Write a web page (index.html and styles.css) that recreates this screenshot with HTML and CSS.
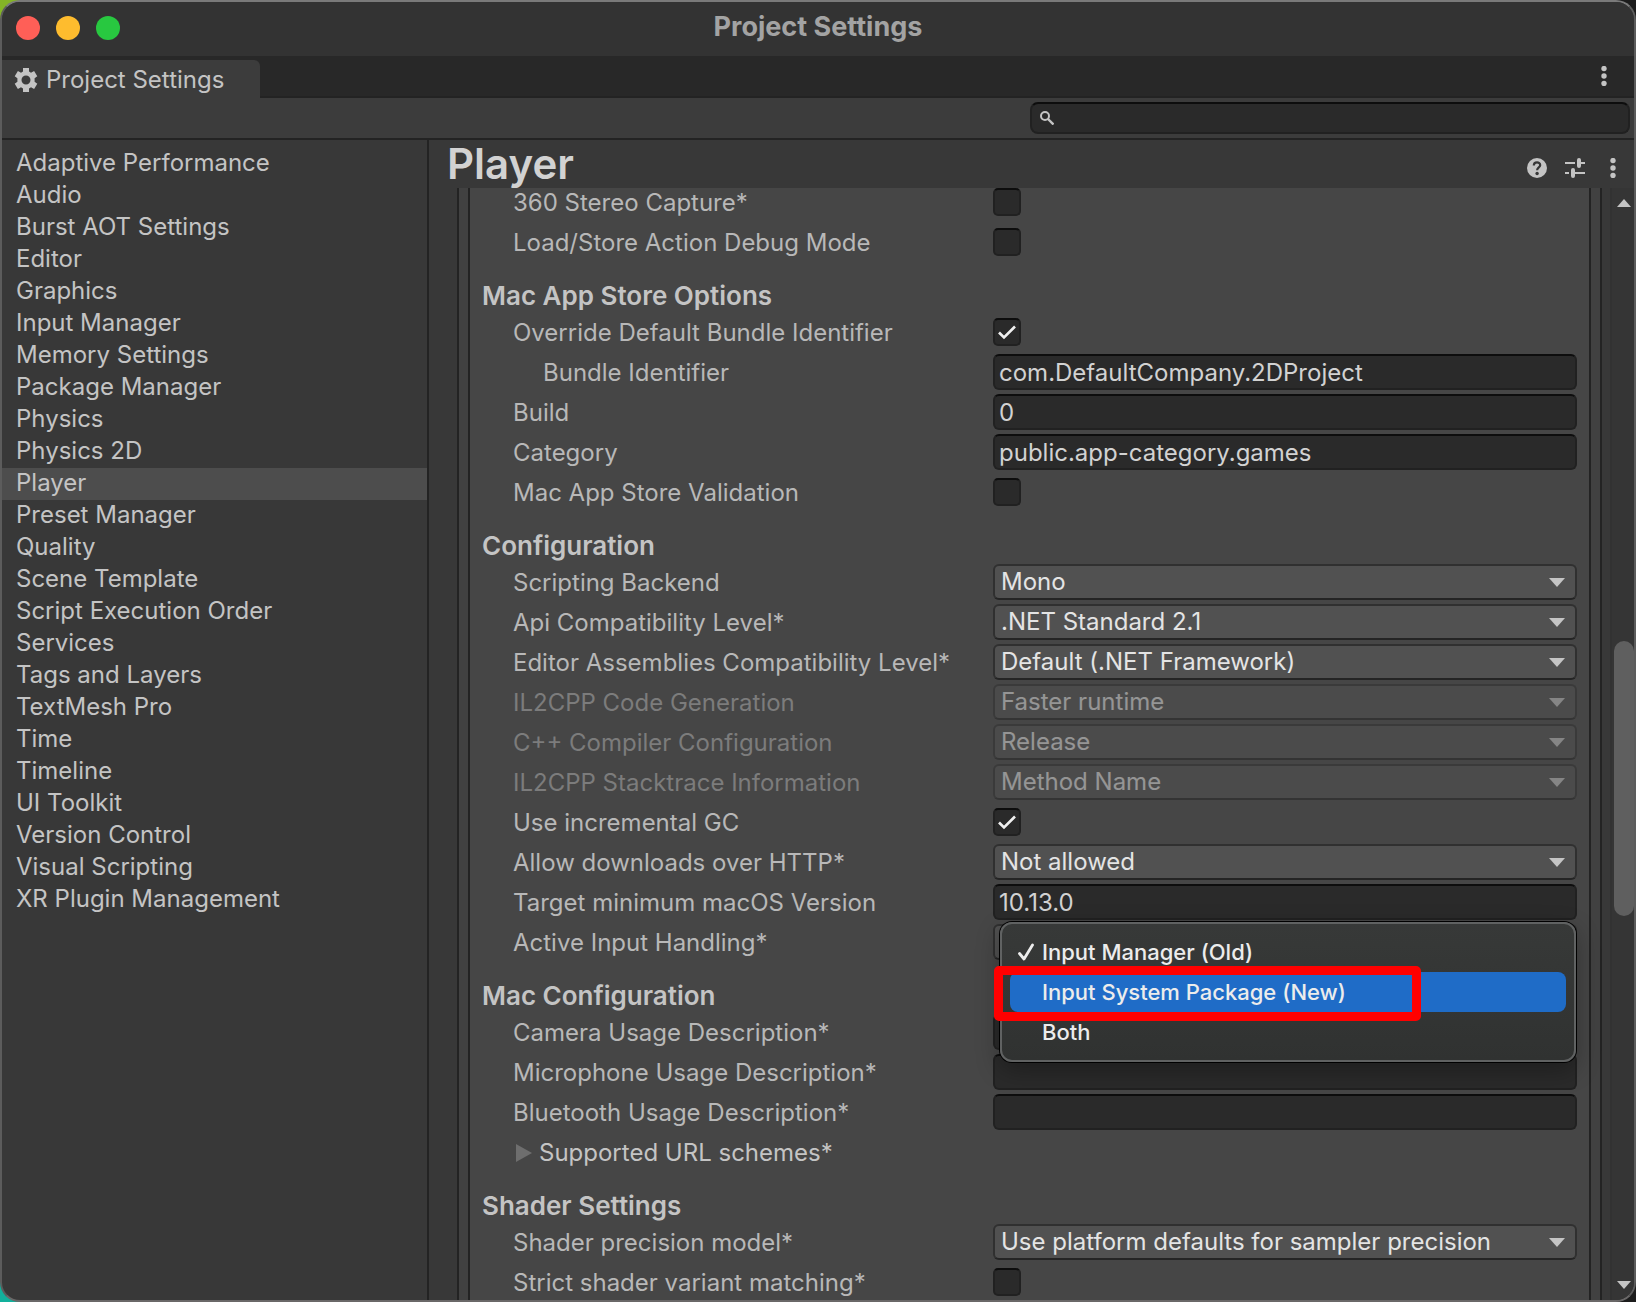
FILE: index.html
```html
<!DOCTYPE html>
<html lang="en">
<head>
    <meta charset="UTF-8">
    <meta name="viewport" content="width=device-width, initial-scale=1.0">
    <title>Project Settings</title>
    <link rel="stylesheet" href="styles.css">
</head>
<body class="page">
    <div class="window">
        <header class="titlebar">
            <div class="titlebar__buttons">
                <button class="light light--close" type="button" aria-label="Close"></button>
                <button class="light light--minimize" type="button" aria-label="Minimize"></button>
                <button class="light light--zoom" type="button" aria-label="Zoom"></button>
            </div>
            <h1 class="titlebar__title">Project Settings</h1>
        </header>

        <div class="tabs">
            <button class="tab" type="button">
                <svg class="tab__ico" viewBox="0 0 24 24" fill="currentColor" fill-rule="evenodd"><path d="M9 0h6v3.600l2 1.100 3.100-1.700 3.200 5.300-2.700 2v3.400l2.700 2-3.200 5.300-3.100-1.700-2 1.100V24H9v-3.600l-2-1.100-3.100 1.700-3.200-5.300 2.700-2v-3.400l-2.700-2 3.200-5.300L7 4.700l2-1.100zM12 7.500a4.500 4.500 0 1 0 0 9a4.500 4.500 0 0 0 0-9z"/></svg>
                Project Settings
            </button>
            <button class="icon-btn tabs__menu" type="button" aria-label="Window menu">
                <svg class="dots" viewBox="0 0 6 20" fill="currentColor"><circle cx="3" cy="2.500" r="2.700"/><circle cx="3" cy="10" r="2.700"/><circle cx="3" cy="17.500" r="2.700"/></svg>
            </button>
        </div>

        <div class="toolbar">
            <label class="search">
                <svg class="search__ico" viewBox="0 0 14 14" fill="none" stroke="currentColor" stroke-width="2"><circle cx="5" cy="5" r="4"/><path d="M8 8l5.500 5.500" stroke-width="2.400"/></svg>
                <input class="search__input" type="text" aria-label="Search settings">
            </label>
        </div>

        <div class="content">
            <nav class="sidebar">
                <a class="sidebar__link" href="#">Adaptive Performance</a>
                <a class="sidebar__link" href="#">Audio</a>
                <a class="sidebar__link" href="#">Burst AOT Settings</a>
                <a class="sidebar__link" href="#">Editor</a>
                <a class="sidebar__link" href="#">Graphics</a>
                <a class="sidebar__link" href="#">Input Manager</a>
                <a class="sidebar__link" href="#">Memory Settings</a>
                <a class="sidebar__link" href="#">Package Manager</a>
                <a class="sidebar__link" href="#">Physics</a>
                <a class="sidebar__link" href="#">Physics 2D</a>
                <a class="sidebar__link sidebar__link--active" href="#">Player</a>
                <a class="sidebar__link" href="#">Preset Manager</a>
                <a class="sidebar__link" href="#">Quality</a>
                <a class="sidebar__link" href="#">Scene Template</a>
                <a class="sidebar__link" href="#">Script Execution Order</a>
                <a class="sidebar__link" href="#">Services</a>
                <a class="sidebar__link" href="#">Tags and Layers</a>
                <a class="sidebar__link" href="#">TextMesh Pro</a>
                <a class="sidebar__link" href="#">Time</a>
                <a class="sidebar__link" href="#">Timeline</a>
                <a class="sidebar__link" href="#">UI Toolkit</a>
                <a class="sidebar__link" href="#">Version Control</a>
                <a class="sidebar__link" href="#">Visual Scripting</a>
                <a class="sidebar__link" href="#">XR Plugin Management</a>
            </nav>

            <main class="main">
                <div class="main__header">
                    <h2 class="main__title">Player</h2>
                    <div class="main__actions">
                        <button class="icon-btn" type="button" aria-label="Help">
                            <svg class="ico" viewBox="0 0 20 20"><circle cx="10" cy="10" r="10" fill="currentColor"/><path d="M6.800 7.600C6.800 3.200 13.300 3.400 13.200 7.300C13.100 9.400 10.200 9.600 10.100 12.300" fill="none" stroke="#383838" stroke-width="2.200"/><circle cx="10.100" cy="15.500" r="1.700" fill="#383838"/></svg>
                        </button>
                        <button class="icon-btn" type="button" aria-label="Presets">
                            <svg class="ico" viewBox="0 0 20 20" fill="none" stroke="currentColor" stroke-width="2"><path d="M0 5h10M14 5h6M0 15h4M8 15h12"/><path d="M14 2v6M8 12v6" stroke-width="4" stroke-linecap="round"/></svg>
                        </button>
                        <button class="icon-btn" type="button" aria-label="More">
                            <svg class="dots" viewBox="0 0 6 20" fill="currentColor"><circle cx="3" cy="2.500" r="2.700"/><circle cx="3" cy="10" r="2.700"/><circle cx="3" cy="17.500" r="2.700"/></svg>
                        </button>
                    </div>
                </div>

                <div class="main__body">
                    <div class="panel">
                        <form class="panel__inner">
                            <div class="row">
                                <label class="row__label" for="stereo">360 Stereo Capture*</label>
                                <input class="check" type="checkbox" id="stereo">
                            </div>
                            <div class="row">
                                <label class="row__label" for="debug">Load/Store Action Debug Mode</label>
                                <input class="check" type="checkbox" id="debug">
                            </div>

                            <h3 class="panel__title">Mac App Store Options</h3>
                            <div class="row">
                                <label class="row__label" for="override">Override Default Bundle Identifier</label>
                                <input class="check" type="checkbox" id="override" checked>
                            </div>
                            <div class="row">
                                <label class="row__label row__label--nested" for="bundle">Bundle Identifier</label>
                                <input class="field" type="text" id="bundle" value="com.DefaultCompany.2DProject">
                            </div>
                            <div class="row">
                                <label class="row__label" for="build">Build</label>
                                <input class="field" type="text" id="build" value="0">
                            </div>
                            <div class="row">
                                <label class="row__label" for="category">Category</label>
                                <input class="field" type="text" id="category" value="public.app-category.games">
                            </div>
                            <div class="row">
                                <label class="row__label" for="validation">Mac App Store Validation</label>
                                <input class="check" type="checkbox" id="validation">
                            </div>

                            <h3 class="panel__title">Configuration</h3>
                            <div class="row">
                                <label class="row__label" for="backend">Scripting Backend</label>
                                <div class="dropdown"><select class="dropdown__select" id="backend"><option>Mono</option></select></div>
                            </div>
                            <div class="row">
                                <label class="row__label" for="api">Api Compatibility Level*</label>
                                <div class="dropdown"><select class="dropdown__select" id="api"><option>.NET Standard 2.1</option></select></div>
                            </div>
                            <div class="row">
                                <label class="row__label" for="assemblies">Editor Assemblies Compatibility Level*</label>
                                <div class="dropdown"><select class="dropdown__select" id="assemblies"><option>Default (.NET Framework)</option></select></div>
                            </div>
                            <div class="row row--disabled">
                                <label class="row__label" for="codegen">IL2CPP Code Generation</label>
                                <div class="dropdown"><select class="dropdown__select" id="codegen" disabled><option>Faster runtime</option></select></div>
                            </div>
                            <div class="row row--disabled">
                                <label class="row__label" for="compiler">C++ Compiler Configuration</label>
                                <div class="dropdown"><select class="dropdown__select" id="compiler" disabled><option>Release</option></select></div>
                            </div>
                            <div class="row row--disabled">
                                <label class="row__label" for="stacktrace">IL2CPP Stacktrace Information</label>
                                <div class="dropdown"><select class="dropdown__select" id="stacktrace" disabled><option>Method Name</option></select></div>
                            </div>
                            <div class="row">
                                <label class="row__label" for="gc">Use incremental GC</label>
                                <input class="check" type="checkbox" id="gc" checked>
                            </div>
                            <div class="row">
                                <label class="row__label" for="http">Allow downloads over HTTP*</label>
                                <div class="dropdown"><select class="dropdown__select" id="http"><option>Not allowed</option></select></div>
                            </div>
                            <div class="row">
                                <label class="row__label" for="macos">Target minimum macOS Version</label>
                                <input class="field" type="text" id="macos" value="10.13.0">
                            </div>
                            <div class="row">
                                <label class="row__label" for="input-handling">Active Input Handling*</label>
                                <div class="dropdown">
                                    <button class="dropdown__select" id="input-handling" type="button" aria-haspopup="listbox" aria-expanded="true"></button>
                                    <div class="menu" role="listbox">
                                        <button class="menu__item" type="button" role="option" aria-selected="true">
                                            <svg class="menu__check" viewBox="0 0 16 18" fill="none" stroke="currentColor" stroke-width="2.800" stroke-linecap="round" stroke-linejoin="round"><path d="M1.500 10.500l4.500 5.500L14.500 2"/></svg>
                                            Input Manager (Old)
                                        </button>
                                        <button class="menu__item menu__item--active" type="button" role="option">Input System Package (New)</button>
                                        <button class="menu__item" type="button" role="option">Both</button>
                                        <div class="menu__mark"></div>
                                    </div>
                                </div>
                            </div>

                            <h3 class="panel__title">Mac Configuration</h3>
                            <div class="row">
                                <label class="row__label" for="camera">Camera Usage Description*</label>
                                <input class="field" type="text" id="camera">
                            </div>
                            <div class="row">
                                <label class="row__label" for="microphone">Microphone Usage Description*</label>
                                <input class="field" type="text" id="microphone">
                            </div>
                            <div class="row">
                                <label class="row__label" for="bluetooth">Bluetooth Usage Description*</label>
                                <input class="field" type="text" id="bluetooth">
                            </div>
                            <div class="row">
                                <button class="foldout" type="button">
                                    <svg class="foldout__ico" viewBox="0 0 16 18" fill="currentColor"><path d="M0 0l16 9L0 18z"/></svg>
                                    Supported URL schemes*
                                </button>
                            </div>

                            <h3 class="panel__title">Shader Settings</h3>
                            <div class="row">
                                <label class="row__label" for="precision">Shader precision model*</label>
                                <div class="dropdown"><select class="dropdown__select" id="precision"><option>Use platform defaults for sampler precision</option></select></div>
                            </div>
                            <div class="row">
                                <label class="row__label" for="strict">Strict shader variant matching*</label>
                                <input class="check" type="checkbox" id="strict">
                            </div>
                        </form>
                    </div>

                    <div class="scrollbar">
                        <button class="scrollbar__btn" type="button" aria-label="Scroll up">
                            <svg class="scrollbar__ico" viewBox="0 0 16 9" fill="currentColor"><path d="M8 0l8 9H0z"/></svg>
                        </button>
                        <div class="scrollbar__track">
                            <div class="scrollbar__thumb"></div>
                        </div>
                        <button class="scrollbar__btn" type="button" aria-label="Scroll down">
                            <svg class="scrollbar__ico" viewBox="0 0 16 9" fill="currentColor"><path d="M0 0h16L8 9z"/></svg>
                        </button>
                    </div>
                </div>
            </main>
        </div>
    </div>
</body>
</html>
```
FILE: styles.css
```css
*, ::after, ::before {
    box-sizing: border-box;
}
body{
    margin: 0;
    font-family: Inter, "Liberation Sans", sans-serif;
    font-size: 24px;
    line-height: 32px;
    color: #c4c4c4;
}
h1,h2,h3{
    margin: 0;
}
button,input,select{
    font: inherit;
    color: inherit;
    margin: 0;
}
button{
    padding: 0;
    border: 0;
    background: none;
}
a{
    color: inherit;
    text-decoration: none;
}
svg{
    display: block;
    flex-shrink: 0;
}
.page{
    background: linear-gradient(90deg, transparent 50%, #1c1c1c 50%), linear-gradient(#84b426 50%, #12b09c 50%);
}
.window{
    display: flex;
    flex-direction: column;
    height: 100vh;
    overflow: hidden;
    border: 2px solid #5c5c5c;
    border-top-color: #7a7a7a;
    border-bottom-color: #6a6868;
    border-radius: 20px;
    background: #383838;
}

.titlebar{
    display: grid;
    grid-template-columns: 1fr auto 1fr;
    align-items: center;
    height: 54px;
    padding: 0 14px 2px;
    background: #333333;
}
.titlebar__buttons{
    display: flex;
    gap: 16px;
}
.titlebar__title{
    padding-bottom: 2px;
    font-size: 27px;
    line-height: 32px;
    font-weight: 700;
    color: #a3a3a3;
}
.light{
    width: 24px;
    height: 24px;
    border-radius: 50%;
}
.light--close{
    background: #ff5f57;
}
.light--minimize{
    background: #febc2e;
}
.light--zoom{
    background: #28c840;
}

.tabs{
    display: flex;
    justify-content: space-between;
    height: 42px;
    padding-top: 4px;
    background: #282828;
    box-shadow: inset 0 -2px #232323;
}
.tab{
    display: flex;
    align-items: center;
    gap: 8px;
    width: 258px;
    padding: 3px 0 0 12px;
    border-top-right-radius: 6px;
    background: #3c3c3c;
}
.tab__ico{
    width: 24px;
    height: 24px;
}
.tabs__menu{
    margin-right: 20px;
    padding-bottom: 6px;
}
.icon-btn{
    display: flex;
    align-items: center;
    justify-content: center;
    min-width: 20px;
}
.dots{
    width: 6px;
    height: 20px;
}
.ico{
    width: 20px;
    height: 20px;
}

.toolbar{
    display: flex;
    justify-content: flex-end;
    height: 42px;
    padding: 4px 4px 4px 0;
    border-bottom: 2px solid #232323;
    background: #3c3c3c;
}
.search{
    display: flex;
    align-items: center;
    gap: 8px;
    width: 600px;
    padding-left: 8px;
    border: 2px solid #212121;
    border-top-color: #0d0d0d;
    border-radius: 8px;
    background: #2a2a2a;
}
.search__ico{
    width: 14px;
    height: 14px;
}
.search__input{
    flex-grow: 1;
    height: 28px;
    padding: 0;
    border: 0;
    background: none;
    outline: none;
}

.content{
    display: flex;
    flex-grow: 1;
    min-height: 0;
}
.sidebar{
    display: flex;
    flex-direction: column;
    width: 427px;
    flex-shrink: 0;
    padding-top: 8px;
    border-right: 2px solid #232323;
}
.sidebar__link{
    padding: 0 0 2px 14px;
    line-height: 30px;
}
.sidebar__link--active{
    background: #4d4d4d;
}

.main{
    display: flex;
    flex-direction: column;
    flex-grow: 1;
    min-width: 0;
}
.main__header{
    display: flex;
    justify-content: space-between;
    height: 48px;
    flex-shrink: 0;
    padding: 0 11px 0 18px;
}
.main__title{
    font-size: 42px;
    line-height: 48px;
    font-weight: 600;
    color: #d2d2d2;
}
.main__actions{
    display: flex;
    gap: 18px;
    padding-top: 8px;
}
.main__body{
    display: flex;
    flex-grow: 1;
    min-height: 0;
    overflow: hidden;
}

.panel{
    flex-grow: 1;
    min-width: 0;
    margin: 0 8px 0 28px;
    padding: 0 9px;
    border: solid #232323;
    border-width: 0 2px;
    background: #414141;
}
/* list is scrolled, the first row is cut a little */
.panel__inner{
    margin-top: -6px;
    padding: 0 12px;
    border: solid #232323;
    border-width: 0 2px;
    background: #464646;
}
.panel__title{
    padding-top: 17px;
    font-size: 26px;
    line-height: 33px;
    font-weight: 600;
}
.row{
    display: grid;
    grid-template-columns: 480px minmax(0, 1fr);
    align-items: center;
    height: 40px;
    padding-left: 31px;
}
.row__label{
    padding-top: 2px;
    color: #b8b8b8;
    white-space: nowrap;
}
.row__label--nested{
    padding-left: 30px;
}
.row--disabled .row__label{
    color: #7c7c7c;
}

.field{
    width: 100%;
    height: 36px;
    padding: 2px 4px 0;
    border: 2px solid #212121;
    border-top-color: #0d0d0d;
    border-radius: 6px;
    background: #2a2a2a;
    color: #d2d2d2;
    outline: none;
}
.check{
    appearance: none;
    width: 28px;
    height: 28px;
    border: 2px solid #212121;
    border-top-color: #0d0d0d;
    border-radius: 5px;
    background: #2a2a2a;
}
.check:checked{
    background: #2a2a2a url("data:image/svg+xml,%3Csvg xmlns='http://www.w3.org/2000/svg' viewBox='0 0 24 24' fill='none' stroke='%23f0f0f0' stroke-width='2.600'%3E%3Cpath d='M4 12.500l5 5L20 6.500'/%3E%3C/svg%3E") center / 24px no-repeat;
}
.dropdown{
    position: relative;
    height: 36px;
}
.dropdown::after{
    content: "";
    position: absolute;
    top: 14px;
    right: 12px;
    border: solid transparent;
    border-width: 9px 8px 0;
    border-top-color: #c4c4c4;
    pointer-events: none;
}
.dropdown__select{
    display: block;
    appearance: none;
    width: 100%;
    height: 36px;
    padding: 0 32px 2px 6px;
    border: 2px solid #303030;
    border-bottom-color: #242424;
    border-radius: 6px;
    background: #515151;
    color: #e4e4e4;
    outline: none;
}
.row--disabled .dropdown{
    opacity: 0.5;
}
.row--disabled .dropdown__select{
    opacity: 1;
}

.menu{
    position: absolute;
    z-index: 1;
    top: -2px;
    left: 7px;
    right: 1px;
    padding: 8px;
    border: 2px solid #606262;
    border-radius: 12px;
    background: linear-gradient(#373938, #303231);
    box-shadow: 0 0 0 1px #000000, 0 8px 24px rgba(0, 0, 0, 0.3);
}
.menu__item{
    display: flex;
    align-items: center;
    gap: 8px;
    width: 100%;
    height: 40px;
    padding-left: 32px;
    border-radius: 8px;
    font-size: 22px;
    font-weight: 500;
    color: #ececec;
}
.menu__item[aria-selected]{
    padding-left: 8px;
}
.menu__item--active{
    background: #1f6cc7;
}
.menu__check{
    width: 16px;
    height: 18px;
}
/* red frame round the highlighted item */
.menu__mark{
    position: absolute;
    top: 42px;
    left: -8px;
    width: 427px;
    height: 55px;
    border: 9px solid #ff0000;
    border-radius: 5px;
    pointer-events: none;
}

.foldout{
    display: flex;
    align-items: center;
    gap: 7px;
    padding: 2px 0 0 3px;
    white-space: nowrap;
}
.foldout__ico{
    width: 16px;
    height: 18px;
    color: #6e6e6e;
}

.scrollbar{
    display: flex;
    flex-direction: column;
    width: 24px;
    flex-shrink: 0;
    padding-left: 2px;
    border-left: 2px solid #323232;
    background: #353535;
}
.scrollbar__btn{
    display: flex;
    align-items: center;
    justify-content: center;
    height: 30px;
}
.scrollbar__ico{
    width: 14px;
    height: 10px;
}
.scrollbar__track{
    display: flex;
    flex-direction: column;
    flex-grow: 1;
}
.scrollbar__track::before{
    content: "";
    flex-grow: 402;
}
.scrollbar__track::after{
    content: "";
    flex-grow: 336;
}
.scrollbar__thumb{
    flex-grow: 262;
    border-radius: 10px;
    background: #5f5f5f;
}
```
